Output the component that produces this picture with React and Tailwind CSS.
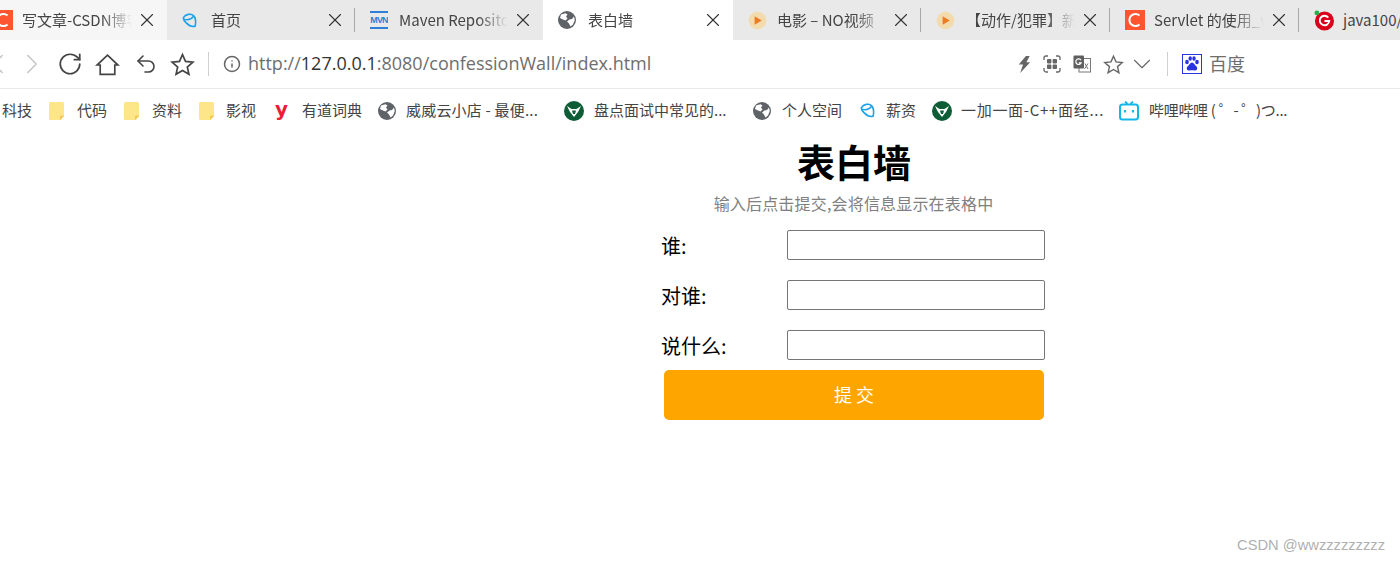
import { ChevronDown, ChevronLeft, ChevronRight, Info, RotateCw, Undo2, X } from 'lucide-react'

const Globe = ({ className = 'w-[18px] h-[18px]' }) => (
  <svg viewBox="0 0 18 18" className={className}>
    <circle cx="9" cy="9" r="9" fill="#5f6368" />
    <path d="M3 3.5 L7.5 2.2 L9.5 3.5 L8 5.5 L9.5 7.5 L7.5 9.5 L5 8.5 L2 7 Z" fill="#fff" />
    <path d="M16 5.5 L16.8 9 L15 13.5 L12.5 15.5 L11 12.5 L9 10.5 L11.5 8.5 L14 8 Z" fill="#fff" />
  </svg>
)

const Csdn = () => (
  <svg viewBox="0 0 20 20" className="w-5 h-5">
    <rect width="20" height="20" fill="#fc5531" />
    <path d="M14.5 5.6 A6 6 0 1 0 14.5 14.4" fill="none" stroke="#fff" strokeWidth="2" />
  </svg>
)

const Bird = () => (
  <svg viewBox="0 0 16 16" className="w-[15px] h-[15px]">
    <path d="M1.5 5 C4 1 9 0.5 12 2.5 C14.5 4.5 15 9 14 14 C11 15 7 13 4.5 10.5 C2.5 8.5 1 7 1.5 5 Z" fill="none" stroke="#1da1e8" strokeWidth="1.7" />
    <path d="M2 6.5 C6 8 10 6.5 12.5 3.5" fill="none" stroke="#1da1e8" strokeWidth="1.5" />
  </svg>
)

const Mvn = () => (
  <div className="w-[18px] h-[18px] flex flex-col justify-between overflow-hidden">
    <div className="h-[2px] bg-[#2f7ed8]" />
    <div className="text-[9px] leading-[9px] font-bold text-center tracking-[-0.8px] text-[#2f7ed8] font-['Liberation_Sans',sans-serif]">MVN</div>
    <div className="h-[2px] bg-[#2f7ed8]" />
  </div>
)

const Play = () => (
  <svg viewBox="0 0 20 20" className="w-[19px] h-[19px]">
    <path d="M10 0.5 L14.5 1.8 L18 5 L19.5 10 L18 15 L14.5 18.2 L10 19.5 L5.5 18.2 L2 15 L0.5 10 L2 5 L5.5 1.8 Z" fill="#f2dcae" />
    <path d="M7 5.5 L14.5 10 L7 14.5 Z" fill="#ee7a22" />
  </svg>
)

const Iteye = () => (
  <svg viewBox="0 0 21 21" className="w-[21px] h-[21px]">
    <circle cx="11" cy="11" r="10" fill="#d9001b" />
    <path d="M15 7.5 A5 5 0 1 0 16 11 L11 11" fill="none" stroke="#fff" strokeWidth="2" />
    <circle cx="3" cy="2.5" r="2.5" fill="#22b14c" />
  </svg>
)

const Baidu = () => (
  <svg viewBox="0 0 20 20" className="w-5 h-5">
    <rect x="0.5" y="0.5" width="19" height="19" fill="#fff" stroke="#2932e1" />
    <ellipse cx="5" cy="8" rx="1.8" ry="2.2" fill="#2932e1" />
    <ellipse cx="8.2" cy="4.5" rx="1.7" ry="2.2" fill="#2932e1" />
    <ellipse cx="12" cy="4.5" rx="1.7" ry="2.2" fill="#2932e1" />
    <ellipse cx="15" cy="8" rx="1.8" ry="2.2" fill="#2932e1" />
    <path d="M10 8.5 C12 8.5 12.5 11 14.5 12.5 C16 14 15 17 12.5 16.5 C11 16.2 9 16.2 7.5 16.5 C5 17 4 14 5.5 12.5 C7.5 11 8 8.5 10 8.5 Z" fill="#2932e1" />
  </svg>
)

const Folder = () => (
  <svg viewBox="0 0 15 18" className="w-[15px] h-[18px]">
    <path d="M1.5 0 H13.5 A1.5 1.5 0 0 1 15 1.5 V14 L12 18 H1.5 A1.5 1.5 0 0 1 0 16.5 V1.5 A1.5 1.5 0 0 1 1.5 0 Z" fill="#fde58a" />
    <path d="M11.5 17.5 V14 H15" fill="#f4c95d" stroke="#f0c050" strokeWidth="0.7" />
  </svg>
)

const Youdao = () => (
  <div className="w-[14px] h-[18px] -mt-1 text-[20px] leading-[18px] font-bold text-[#ee1c36] font-['DejaVu_Sans',sans-serif]">y</div>
)

const GreenBull = () => (
  <svg viewBox="0 0 20 20" className="w-5 h-5">
    <circle cx="10" cy="10" r="10" fill="#0f5d36" />
    <path d="M3 5 L7.5 8 H12.5 L17 5 L14 11 L10 16 L6 11 Z" fill="#fff" />
    <path d="M8 9.5 H12 L11 13 H9 Z" fill="#0f5d36" />
  </svg>
)

const Bili = () => (
  <svg viewBox="0 0 20 20" className="w-5 h-5">
    <path d="M6 0.5 L8.5 3 M14 0.5 L11.5 3" stroke="#12b7e8" strokeWidth="1.8" />
    <rect x="1" y="3.5" width="18" height="15" rx="2.5" fill="none" stroke="#12b7e8" strokeWidth="2" />
    <path d="M6 9 V11.5 M14 9 V11.5" stroke="#12b7e8" strokeWidth="2.2" />
  </svg>
)

const StarOutline = ({ className }) => (
  <svg viewBox="0 0 24 24" className={className}>
    <path d="M12 2.5 L14.9 9 L22 9.7 L16.6 14.4 L18.2 21.4 L12 17.7 L5.8 21.4 L7.4 14.4 L2 9.7 L9.1 9 Z" fill="none" stroke="currentColor" strokeWidth="1.6" strokeLinejoin="miter" />
  </svg>
)

const tabs = [
  { icon: <Csdn />, title: '写文章-CSDN博客', cls: 'w-[189px] -ml-[22px] bg-[#f6f6f6] pr-[9px]', left: 'ml-[9px]' },
  { icon: <Bird />, title: '首页', cls: 'w-[188px] pr-[9px]', line: true, left: 'ml-[9px]' },
  { icon: <Mvn />, title: 'Maven Repository', cls: 'w-[188px] pr-[9px]', left: 'ml-[9px]' },
  { icon: <Globe />, title: '表白墙', cls: 'w-[190px] bg-white pr-[9px]', left: 'ml-[10px]' },
  { icon: <Play />, title: '电影 – NO视频', cls: 'w-[188px] pr-[9px]', line: true, left: 'ml-[9px]' },
  { icon: <Play />, title: '【动作/犯罪】新', cls: 'w-[189px] pr-[9px]', line: true, left: 'ml-[10px]' },
  { icon: <Csdn />, title: 'Servlet 的使用_w', cls: 'w-[189px] pr-[9px]', line: true, left: 'ml-[9px]' },
  { icon: <Iteye />, title: 'java100/', cls: 'w-[101px]', left: 'ml-[9px]', last: true },
]

const bookmarks = [
  { icon: <Folder />, label: '代码', cls: 'w-[75px]', slot: 'w-[28px]' },
  { icon: <Folder />, label: '资料', cls: 'w-[75px]', slot: 'w-[28px]' },
  { icon: <Folder />, label: '影视', cls: 'w-[76px]', slot: 'w-[27px]' },
  { icon: <Youdao />, label: '有道词典', cls: 'w-[103px]', slot: 'w-[27px]' },
  { icon: <Globe />, label: '威威云小店 - 最便...', cls: 'w-[186px]', slot: 'w-[28px]', text: 'tracking-[0.2px]' },
  { icon: <GreenBull />, label: '盘点面试中常见的...', cls: 'w-[189px]', slot: 'w-[30px]' },
  { icon: <Globe />, label: '个人空间', cls: 'w-[107px]', slot: 'w-[29px]' },
  { icon: <Bird />, label: '薪资', cls: 'w-[72px]', slot: 'w-[26px]' },
  { icon: <GreenBull />, label: '一加一面-C++面经...', cls: 'w-[187px]', slot: 'w-[29px]', text: 'tracking-[0.7px]' },
  { icon: <Bili />, label: '哔哩哔哩 ( ゜- ゜)つ...', cls: 'w-[200px]', slot: 'w-[30px]', text: 'tracking-[-0.3px]' },
]

function Tab({ tab }) {
  return (
    <div className={`relative flex shrink-0 items-center h-10 pl-[15px] ${tab.cls}`}>
      <div className="flex w-5 shrink-0 items-center justify-start">{tab.icon}</div>
      <div className={`${tab.left} min-w-0 flex-1 whitespace-nowrap text-[15px] text-[#444] ${tab.last ? '' : 'overflow-hidden [mask-image:linear-gradient(to_right,black_72%,transparent)]'}`}>
        {tab.title}
      </div>
      {!tab.last && <X size={22} strokeWidth={1.2} className="ml-[4px] shrink-0 text-[#333]" />}
      {tab.line && <div className="absolute right-0 top-2 h-6 w-[1.5px] bg-[#a8a8a8]" />}
    </div>
  )
}

export default function App() {
  return (
    <div className="relative h-[561px] w-[1400px] overflow-hidden bg-white font-['Noto_Sans_CJK_SC','Noto_Sans',sans-serif]">
      <div className="flex h-10 bg-[#e9e9e9]">
        {tabs.map((tab) => <Tab key={tab.title} tab={tab} />)}
      </div>

      <div className="flex h-[49px] items-center border-b border-[#e8e8e8] text-[#444]">
        <ChevronLeft size={34} strokeWidth={1} className="-ml-[19px] shrink-0 text-[#c4c4c4]" />
        <ChevronRight size={34} strokeWidth={1} className="shrink-0 text-[#c4c4c4]" />
        <RotateCw size={26} strokeWidth={1.6} className="ml-[8px] shrink-0" />
        <svg viewBox="0 0 24 24" className="ml-[12px] h-[25px] w-[25px] shrink-0">
          <path d="M12 3 L22 12.5 H19 V21.5 H5 V12.5 H2 Z" fill="none" stroke="currentColor" strokeWidth="1.6" />
        </svg>
        <Undo2 size={24} strokeWidth={1.6} className="ml-[14px] shrink-0" />
        <StarOutline className="ml-[12px] h-[25px] w-[25px] shrink-0" />
        <div className="ml-[13px] h-6 w-px shrink-0 bg-[#d0d0d0]" />
        <Info size={18} strokeWidth={2} className="ml-[14px] shrink-0 text-[#666]" />
        <div className="ml-[7px] -mt-[2px] w-[769px] shrink-0 text-[18px] leading-none text-[#6e6e6e] whitespace-nowrap font-['Open_Sans',sans-serif]">
          http://<span className="text-[#333]">127.0.0.1</span>:8080/confessionWall/index.html
        </div>
        <svg viewBox="0 0 14 20" className="h-[19px] w-[14px] shrink-0">
          <path d="M9 1 L13 1 L9.5 7.5 L13.5 7.5 L3 19 L6 10 L1.5 10 Z" fill="#666" />
        </svg>
        <svg viewBox="0 0 18 18" className="ml-[12px] h-[18px] w-[18px] shrink-0">
          <path d="M5 1 H3 A2 2 0 0 0 1 3 V5 M13 1 H15 A2 2 0 0 1 17 3 V5 M5 17 H3 A2 2 0 0 1 1 15 V13 M13 17 H15 A2 2 0 0 0 17 15 V13" fill="none" stroke="#666" strokeWidth="1.3" />
          <rect x="4" y="4" width="4.4" height="4.4" rx="0.8" fill="#666" />
          <rect x="9.6" y="4" width="4.4" height="4.4" rx="0.8" fill="#666" />
          <rect x="4" y="9.6" width="4.4" height="4.4" rx="0.8" fill="#666" />
          <rect x="9.6" y="9.6" width="4.4" height="4.4" rx="0.8" fill="#666" />
        </svg>
        <svg viewBox="0 0 18 18" className="ml-[12px] h-[18px] w-[18px] shrink-0">
          <rect x="6" y="3.5" width="11.5" height="13.5" fill="#fff" stroke="#777" />
          <rect x="0.5" y="0.5" width="10.5" height="13" rx="1" fill="#5f5f5f" />
          <path d="M8 5.2 A2.8 2.8 0 1 0 8.2 7.8 H5.8" fill="none" stroke="#fff" strokeWidth="1.2" />
          <path d="M12 8.5 L15 14 M15 8.5 L11.5 14" stroke="#777" strokeWidth="1" />
        </svg>
        <StarOutline className="ml-[12px] h-[21px] w-[21px] shrink-0 text-[#666]" />
        <ChevronDown size={30} strokeWidth={0.9} className="ml-[3px] shrink-0 text-[#666]" />
        <div className="ml-[10px] h-6 w-px shrink-0 bg-[#d0d0d0]" />
        <div className="ml-[14px] shrink-0"><Baidu /></div>
        <div className="ml-[7px] -mt-[3px] shrink-0 text-[18px] leading-none text-[#6e6e6e]">百度</div>
      </div>

      <div className="flex h-[43px] items-center text-[15px] text-[#444] whitespace-nowrap">
        <div className="w-[49px] shrink-0 pl-[2px]">科技</div>
        {bookmarks.map((b) => (
          <div key={b.label} className={`flex shrink-0 items-center ${b.cls}`}>
            <div className={`flex shrink-0 items-center ${b.slot}`}>{b.icon}</div>
            <span className={b.text}>{b.label}</span>
          </div>
        ))}
      </div>

      <main className="ml-[662px] w-[385px]">
        <h1 className="mt-[3px] pr-[1px] text-center text-[38px] leading-[52px] font-bold text-black">表白墙</h1>
        <p className="mt-[5px] pr-[2px] text-center text-[16px] leading-[22px] tracking-[0.18px] text-[#808080]">输入后点击提交,会将信息显示在表格中</p>
        <div className="mt-[16px] flex flex-col gap-5">
          {['谁:', '对谁:', '说什么:'].map((label) => (
            <div key={label} className="flex h-[30px] items-center">
              <label className="mt-[2px] w-[125px] -translate-x-px text-[20px] leading-[30px] text-black">{label}</label>
              <input className="h-[30px] w-[258px] rounded-[2px] border border-[#767676] bg-white" />
            </div>
          ))}
        </div>
        <button className="ml-[2px] mt-[10px] block h-[50px] w-[380px] rounded-[5px] bg-[#ffa500] pb-[2px] text-[18px] text-white">提 交</button>
      </main>

      <div className="absolute bottom-[6px] right-[15px] text-[14.7px] leading-5 text-[#b0b0b0] font-['Liberation_Sans',sans-serif]">CSDN @wwzzzzzzzzz</div>
    </div>
  )
}
